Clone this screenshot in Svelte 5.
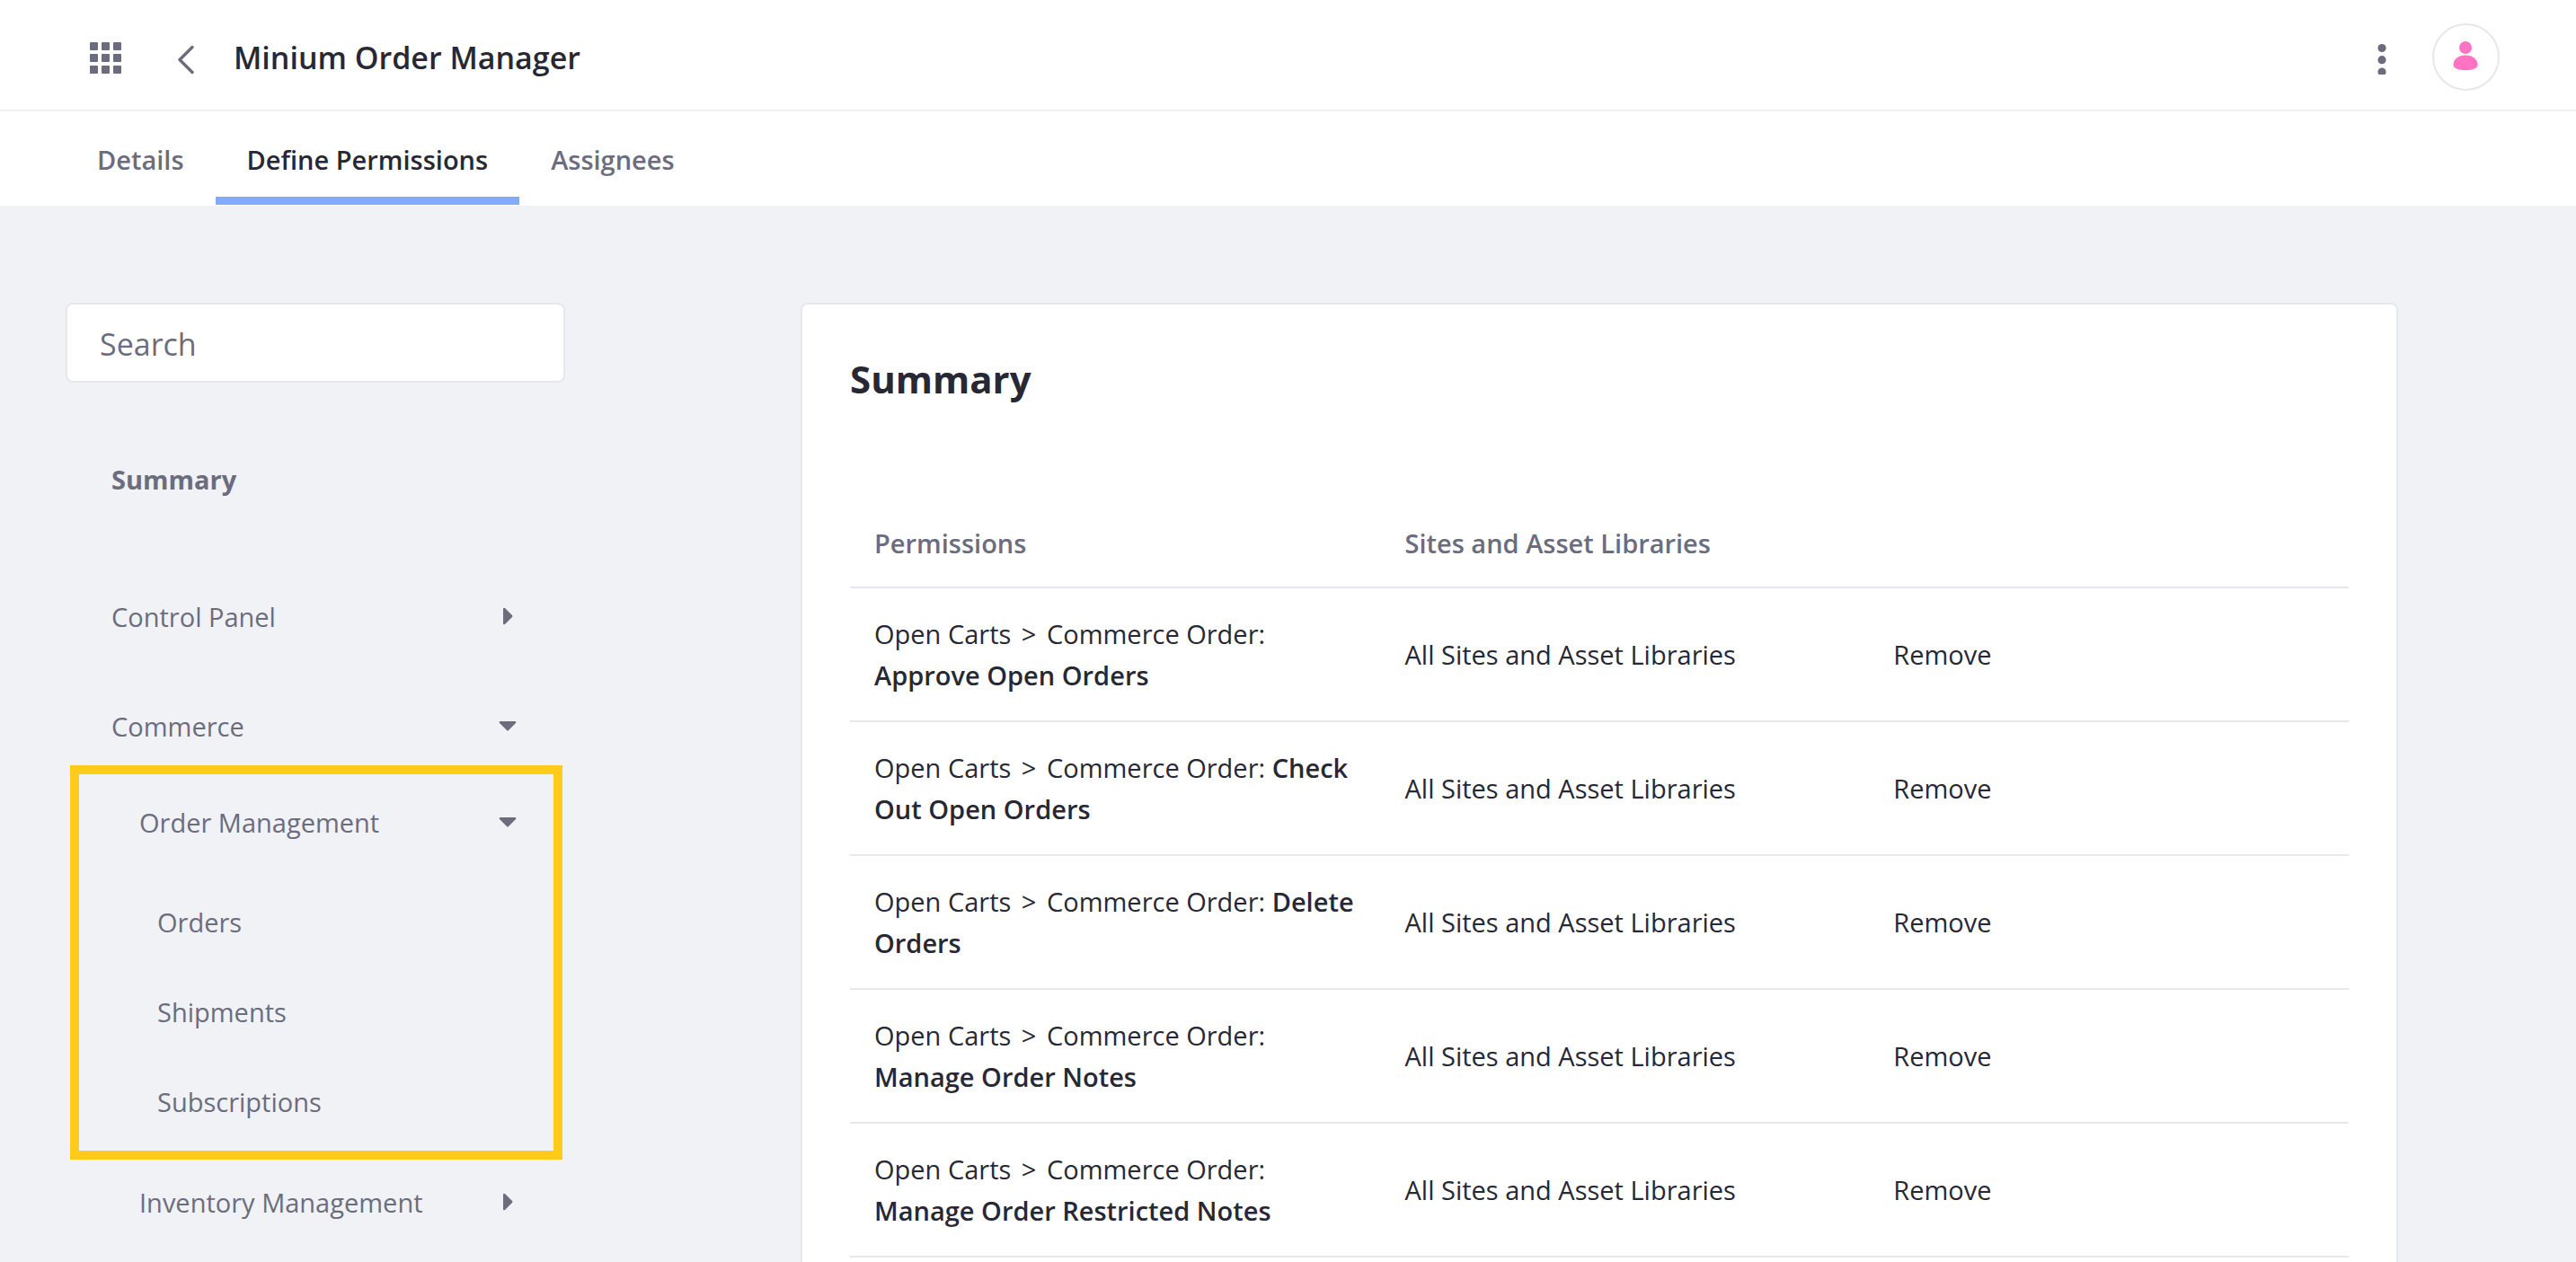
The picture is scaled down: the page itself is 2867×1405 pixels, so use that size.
<script>
  const tabs = ['Details', 'Define Permissions', 'Assignees'];
  let activeTab = $state('Define Permissions');
  let query = $state('');

  const orderPages = ['Orders', 'Shipments', 'Subscriptions'];

  let permissions = $state([
    'Approve Open Orders',
    'Check Out Open Orders',
    'Delete Orders',
    'Manage Order Notes',
    'Manage Order Restricted Notes'
  ]);

  function remove(name) {
    permissions = permissions.filter((item) => item !== name);
  }
</script>

{#snippet caret(open)}
  <svg class="caret" viewBox="0 0 24 24" aria-hidden="true">
    {#if open}
      <path d="M4 6h16q2 0 1 2l-8 8q-1 1-2 0L3 8Q2 6 4 6z" />
    {:else}
      <path d="M7 3q0-2 2-1l8 8q1 1 0 2l-8 8q-2 1-2-1z" />
    {/if}
  </svg>
{/snippet}

<div class="page">
  <header class="topbar">
    <button class="icon" aria-label="Applications menu">
      <svg viewBox="0 0 40 40" aria-hidden="true">
        {#each [4, 17, 30] as y}
          {#each [0, 13, 26] as x}
            <rect {x} {y} width="9" height="9" rx="1" />
          {/each}
        {/each}
      </svg>
    </button>
    <a class="icon back" href="#back" aria-label="Back">
      <svg viewBox="0 0 40 40" aria-hidden="true">
        <path class="stroke" d="M16 9.500L2 23.500L16 37.500" />
      </svg>
    </a>
    <h1>Minium Order Manager</h1>
    <button class="icon more" aria-label="More options">
      <svg viewBox="0 0 40 40" aria-hidden="true">
        <circle cx="20" cy="10.500" r="4.600" />
        <circle cx="20" cy="23.700" r="4.600" />
        <circle cx="20" cy="37" r="4.600" />
      </svg>
    </button>
    <button class="avatar" aria-label="User profile">
      <svg viewBox="0 0 40 40" aria-hidden="true">
        <circle cx="19" cy="10" r="7" />
        <path d="M19 18.500c8 0 13.500 4.500 13.500 10.500 0 4-5 6.200-13.500 6.200S5.500 33 5.500 29C5.500 23 11 18.500 19 18.500z" />
      </svg>
    </button>
  </header>

  <nav class="tabs" aria-label="Role sections">
    {#each tabs as tab}
      <button class="tab" class:active={tab === activeTab} onclick={() => (activeTab = tab)}>{tab}</button>
    {/each}
  </nav>

  <main>
    <aside>
      <input class="search" type="search" placeholder="Search" aria-label="Search" bind:value={query} />
      <a class="item summary" href="#summary">Summary</a>
      <button class="item control">Control Panel {@render caret(false)}</button>
      <button class="item commerce" aria-expanded="true">Commerce {@render caret(true)}</button>
      <section class="highlight">
        <button class="item nested" aria-expanded="true">Order Management {@render caret(true)}</button>
        <ul>
          {#each orderPages as name}
            <li><a class="item" href="#{name}">{name}</a></li>
          {/each}
        </ul>
      </section>
      <button class="item nested inventory">Inventory Management {@render caret(false)}</button>
    </aside>

    <section class="card">
      <h2>Summary</h2>
      <table>
        <thead>
          <tr>
            <th class="permission" scope="col">Permissions</th>
            <th class="scope" scope="col">Sites and Asset Libraries</th>
            <td></td>
          </tr>
        </thead>
        <tbody>
          {#each permissions as name (name)}
            <tr>
              <td>Open Carts <span class="separator">&gt;</span> Commerce Order: <strong>{name}</strong></td>
              <td>All Sites and Asset Libraries</td>
              <td><button class="remove" onclick={() => remove(name)}>Remove</button></td>
            </tr>
          {/each}
        </tbody>
      </table>
    </section>
  </main>
</div>

<style>
  :global(body) {
    background: #f1f2f5;
  }

  .page {
    --ink: #272833;
    --muted: #6b6c7e;
    --line: #e7e7ed;
    display: flex;
    flex-direction: column;
    min-height: 100vh;
    box-sizing: border-box;
    background: #f1f2f5;
    color: var(--ink);
    font-family: 'Segoe UI', 'Open Sans', 'Noto Sans', sans-serif;
    font-size: 29px;
    line-height: 46px;
  }

  .page :global(*) {
    box-sizing: border-box;
  }

  button {
    margin: 0;
    padding: 0;
    border: 0;
    background: none;
    color: inherit;
    font: inherit;
    text-align: left;
    cursor: pointer;
  }

  a {
    color: inherit;
    text-decoration: none;
  }

  svg {
    display: block;
    fill: currentColor;
  }

  .topbar {
    display: flex;
    align-items: center;
    height: 124px;
    padding: 4px 85px 0 100px;
    border-bottom: 2px solid #f1f2f5;
    background: #fff;
  }

  .icon {
    width: 40px;
    height: 40px;
    color: var(--muted);
  }

  .back {
    margin: 0 22px 0 58px;
  }

  .stroke {
    fill: none;
    stroke: currentColor;
    stroke-width: 3.400;
    stroke-linecap: round;
    stroke-linejoin: round;
  }

  h1 {
    margin: 0;
    padding-top: 2px;
    font-size: 34px;
    font-weight: 600;
  }

  .more {
    margin: 0 36px 0 auto;
  }

  .avatar {
    display: grid;
    place-items: center;
    width: 75px;
    height: 75px;
    border: 2px solid var(--line);
    border-radius: 50%;
    color: #ff73c3;
  }

  .avatar svg {
    width: 40px;
    height: 40px;
  }

  .tabs {
    display: flex;
    height: 105px;
    padding: 0 73px 1px;
    background: #fff;
  }

  .tab {
    padding: 12px 35px 0;
    border-bottom: 9px solid transparent;
    color: var(--muted);
    font-weight: 600;
  }

  .tab.active {
    border-bottom-color: #80acff;
    color: var(--ink);
  }

  main {
    display: flex;
    flex: 1;
    gap: 262px;
    padding: 108px 198px 0 73px;
  }

  aside {
    flex: 0 0 556px;
    color: var(--muted);
  }

  .search {
    display: block;
    width: 100%;
    height: 89px;
    padding: 2px 36px 0;
    border: 2px solid var(--line);
    border-radius: 8px;
    outline: 0;
    background: #fff;
    color: var(--ink);
    font: inherit;
    font-size: 34px;
    appearance: none;
  }

  .search::placeholder {
    color: var(--muted);
    opacity: 1;
  }

  .item {
    display: flex;
    align-items: center;
    justify-content: space-between;
    width: 100%;
    height: 50px;
    padding: 0 52px 0 51px;
  }

  .summary {
    margin-top: 83px;
    font-weight: 700;
  }

  .control {
    margin-top: 103px;
  }

  .commerce {
    margin-top: 72px;
  }

  .nested {
    padding-left: 82px;
  }

  .highlight {
    margin: 18px 3px 0 5px;
    padding: 29px 0;
    border: 10px solid #ffcb1a;
  }

  .highlight .item {
    padding: 0 39px 0 67px;
  }

  .inventory {
    margin-top: 23px;
  }

  ul {
    display: grid;
    gap: 50px;
    margin: 61px 0 0;
    padding: 0;
    list-style: none;
  }

  .highlight li .item {
    padding-left: 87px;
  }

  .caret {
    width: 24px;
    height: 24px;
  }

  .card {
    flex: 1;
    min-width: 0;
    padding: 52px 53px 0;
    border: 2px solid var(--line);
    border-bottom: 0;
    border-radius: 8px 8px 0 0;
    background: #fff;
  }

  h2 {
    margin: 0;
    font-size: 42px;
    line-height: 62px;
    font-weight: 700;
  }

  table {
    width: 100%;
    margin-top: 101px;
    border-collapse: separate;
    border-spacing: 0;
    table-layout: fixed;
  }

  th,
  td {
    padding: 28px 27px 27px;
    border-bottom: 2px solid var(--line);
    text-align: left;
    vertical-align: middle;
  }

  thead th,
  thead td {
    padding-bottom: 25px;
  }

  th {
    color: var(--muted);
    font-weight: 600;
  }

  .permission {
    width: 35.4%;
  }

  .scope {
    width: 32.6%;
  }

  .separator {
    margin: 0 4px;
  }

  strong {
    font-weight: 600;
  }
</style>
